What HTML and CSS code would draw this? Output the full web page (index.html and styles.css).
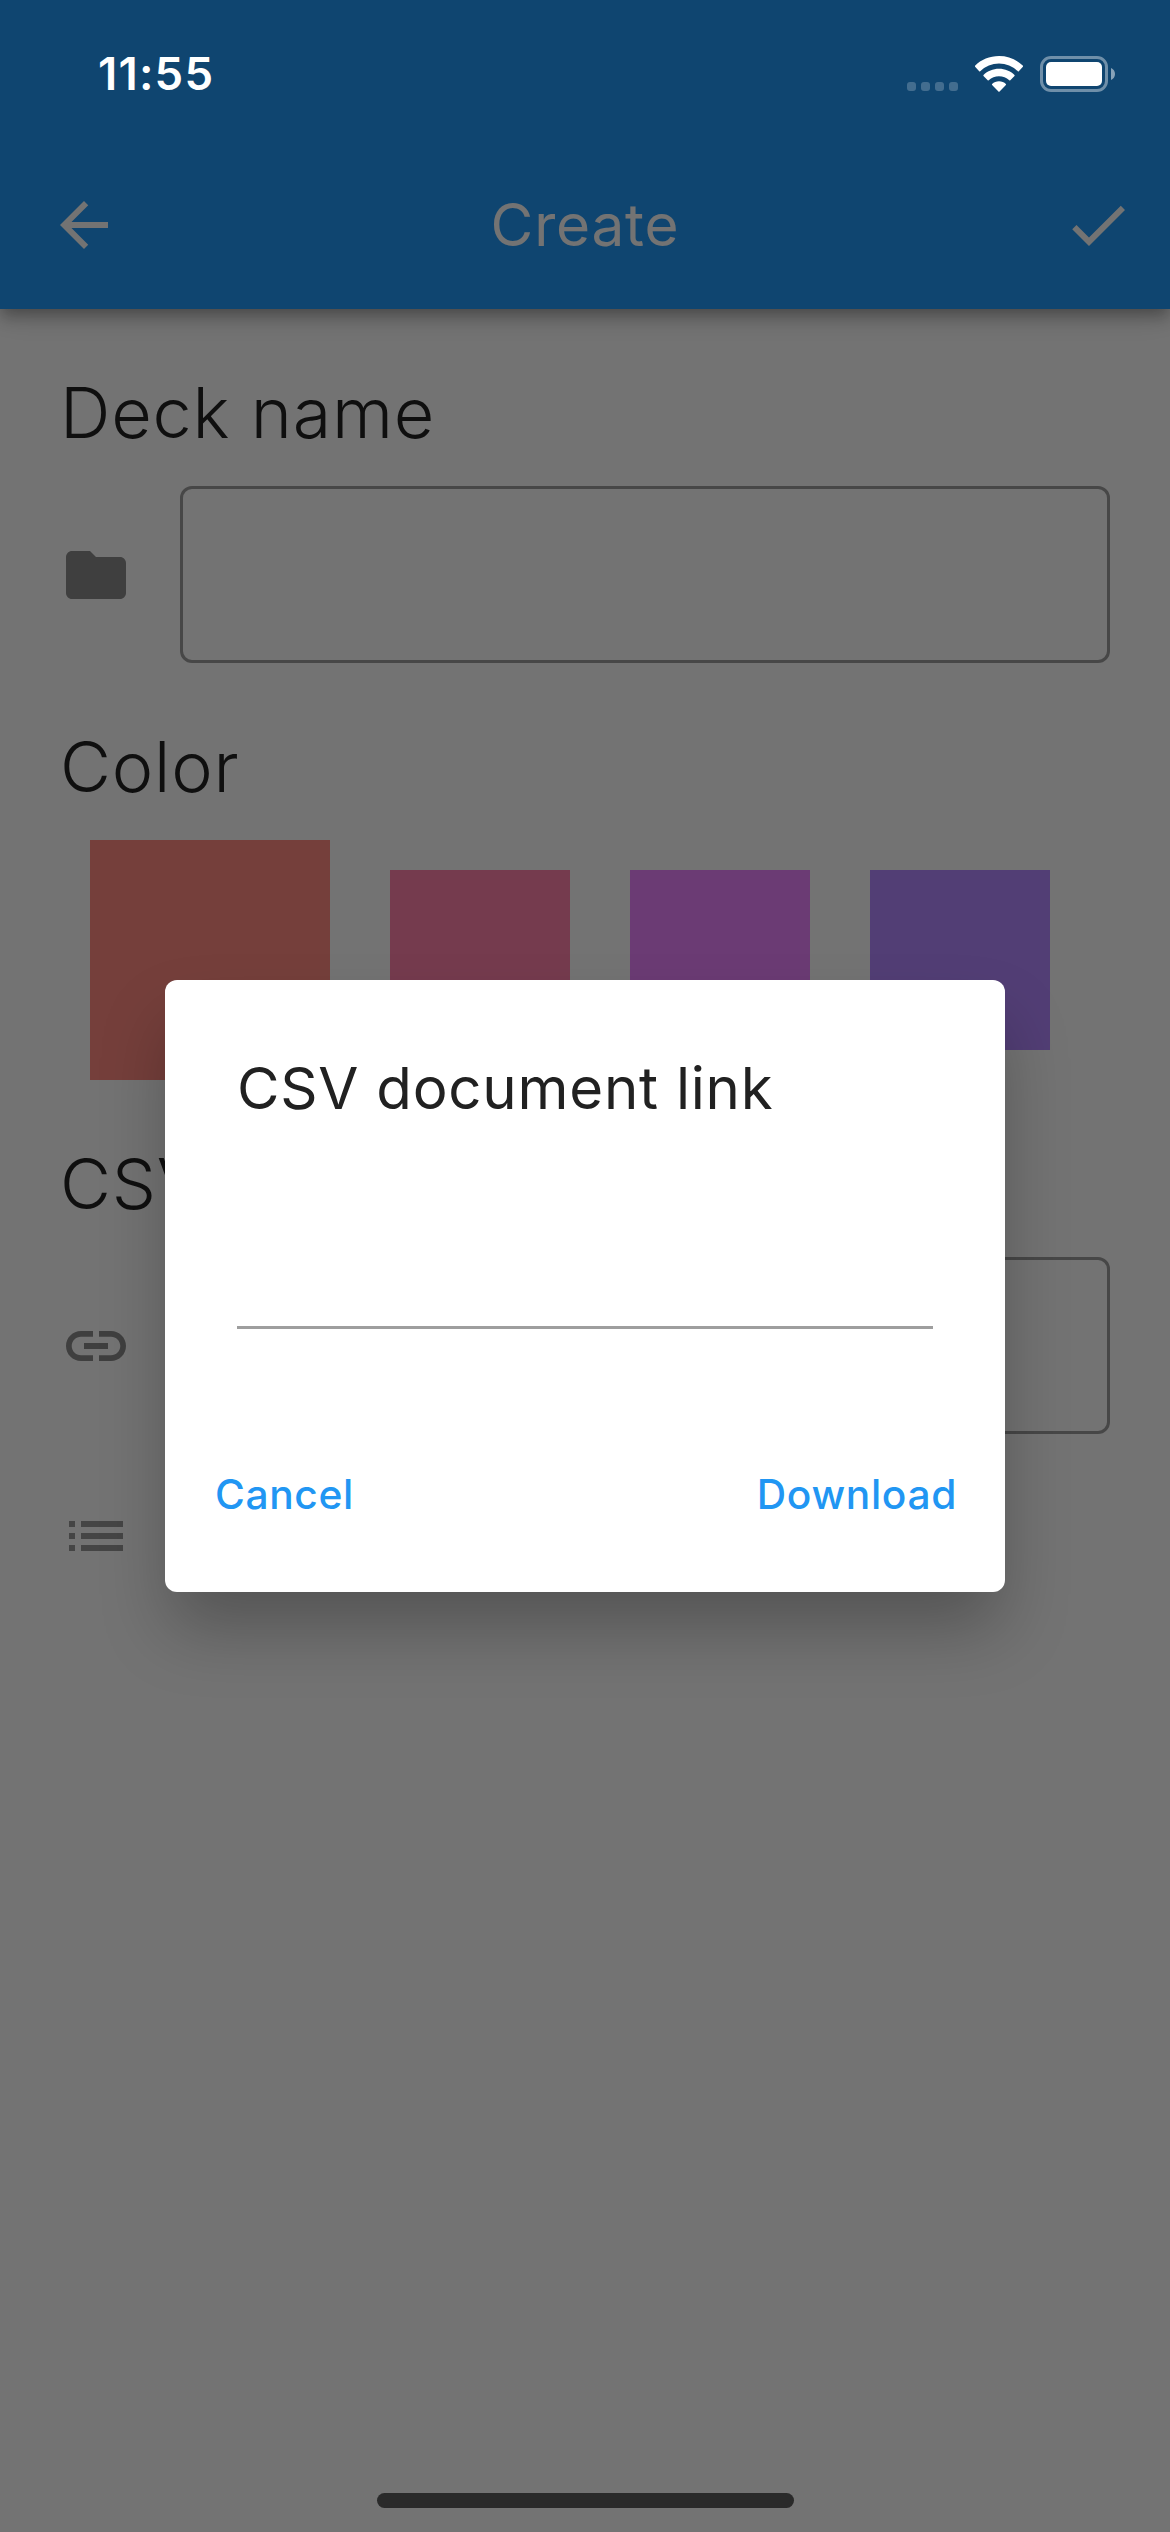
FILE: index.html
```html
<!DOCTYPE html>
<html lang="en">
<head>
<meta charset="utf-8">
<title>Create</title>
<link rel="stylesheet" href="styles.css">
</head>
<body>
<div class="screen">
  <header class="app-bar">
    <svg class="icon" viewBox="0 0 24 24"><path d="M20 11H7.83l5.59-5.59L12 4l-8 8 8 8 1.41-1.41L7.83 13H20z"/></svg>
    <h1 class="app-title">Create</h1>
    <svg class="icon" viewBox="0 0 24 24"><path d="M9 16.17L4.83 12l-1.42 1.41L9 19 21 7l-1.41-1.41z"/></svg>
  </header>

  <main class="content">
    <section class="group">
      <h2 class="heading">Deck name</h2>
      <div class="field-row">
        <svg class="icon" viewBox="0 0 24 24"><path d="M10 4H4c-1.1 0-1.99.9-1.99 2L2 18c0 1.1.9 2 2 2h16c1.1 0 2-.9 2-2V8c0-1.1-.9-2-2-2h-8l-2-2z"/></svg>
        <div class="field"></div>
      </div>
    </section>
    <section class="group">
      <h2 class="heading">Color</h2>
      <div class="swatches">
        <div class="swatch red selected"></div>
        <div class="swatch pink"></div>
        <div class="swatch purple"></div>
        <div class="swatch violet"></div>
      </div>
    </section>
    <section class="group">
      <h2 class="heading">CSV</h2>
      <div class="field-row">
        <svg class="icon" viewBox="0 0 24 24"><path d="M3.9 12c0-1.71 1.39-3.1 3.1-3.1h4V7H7c-2.76 0-5 2.24-5 5s2.24 5 5 5h4v-1.9H7c-1.71 0-3.1-1.39-3.1-3.1zM8 13h8v-2H8v2zm9-6h-4v1.9h4c1.71 0 3.1 1.39 3.1 3.1s-1.39 3.1-3.1 3.1h-4V17h4c2.76 0 5-2.24 5-5s-2.24-5-5-5z"/></svg>
        <div class="field"></div>
      </div>
      <svg class="icon list-icon" viewBox="0 0 24 24"><path d="M3 13h2v-2H3v2zm0 4h2v-2H3v2zm0-8h2V7H3v2zm4 4h14v-2H7v2zm0 4h14v-2H7v2zM7 7v2h14V7H7z"/></svg>
    </section>
  </main>

  <div class="barrier">
    <div class="dialog">
      <h3 class="dialog-title">CSV document link</h3>
      <div class="link-input"></div>
      <div class="actions">
        <span class="action cancel">Cancel</span>
        <span class="action download">Download</span>
      </div>
    </div>
  </div>

  <div class="status-bar">
    <span class="time">11:55</span>
    <div class="indicators">
      <div class="dots"><i></i><i></i><i></i><i></i></div>
      <svg class="wifi" viewBox="0 0 48 36"><path d="M24 0C33.4 0 41.800 3.600 48 9.700Q48.300 10.200 47.900 10.700L43.800 15.200Q43.300 15.600 42.800 15.200A27 27 0 0 0 5.200 15.200Q4.700 15.600 4.200 15.200L.1 10.700Q-.3 10.200 0 9.700C6.200 3.600 14.600 0 24 0z"/><path d="M24 12.800C30 12.800 35.500 15.100 39.500 18.900Q39.900 19.400 39.500 19.900L35.300 24.200Q34.800 24.600 34.300 24.200A15.500 15.500 0 0 0 13.700 24.200Q13.200 24.600 12.700 24.200L8.500 19.900Q8.100 19.400 8.500 18.900C12.500 15.100 18 12.800 24 12.800z"/><path d="M24 25.200C26.700 25.200 29.100 26.200 30.900 27.900Q31.300 28.400 30.900 28.900L24.600 35.500Q24 36 23.400 35.500L17.100 28.900Q16.700 28.400 17.100 27.900C18.900 26.200 21.300 25.200 24 25.200z"/></svg>
      <svg class="battery" viewBox="0 0 75 36"><rect x="1.500" y="1.500" width="65" height="33" rx="9.500" fill="none" stroke="#fff" stroke-width="3" opacity=".4"/><rect x="6" y="6" width="56" height="24" rx="5"/><path d="M71 12c2.400 1 4 3.300 4 6s-1.600 5-4 6z" opacity=".5"/></svg>
    </div>
  </div>
  <div class="home-indicator"></div>
</div>
</body>
</html>
```

FILE: styles.css
```css
* { box-sizing: border-box; margin: 0; }

body { font-family: Inter, "Liberation Sans", sans-serif; }

.screen {
  position: relative;
  width: 1170px;
  height: 2532px;
  overflow: hidden;
  background: #fafafa;
}

.icon { width: 72px; height: 72px; flex: none; display: block; fill: currentColor; }

.app-bar {
  position: relative;
  z-index: 1;
  display: flex;
  align-items: center;
  justify-content: space-between;
  height: 309px;
  padding: 141px 36px 0 48px;
  background: #2196f3;
  color: #fafafa;
  box-shadow: 0 6px 12px -3px rgba(0, 0, 0, .2), 0 12px 15px rgba(0, 0, 0, .14), 0 3px 30px rgba(0, 0, 0, .12);
}

.app-title {
  margin-right: 12px;
  font-size: 58.500px;
  line-height: 72px;
  font-weight: 400;
  letter-spacing: .8px;
}

.content {
  display: flex;
  flex-direction: column;
  gap: 59px;
  padding: 59px 60px 0;
  color: rgba(0, 0, 0, .45);
}

.heading {
  margin-bottom: 28px;
  font-size: 70px;
  line-height: 90px;
  font-weight: 300;
  letter-spacing: .8px;
  color: rgba(0, 0, 0, .87);
}

.field-row { display: flex; align-items: center; gap: 48px; }

.field {
  flex: 1;
  height: 177px;
  border: 3px solid rgba(0, 0, 0, .38);
  border-radius: 12px;
}

.swatches { display: flex; align-items: center; gap: 60px; height: 240px; padding-left: 30px; }
.swatch { width: 180px; height: 180px; }
.swatch.selected { width: 240px; height: 240px; }
.red { background: #ff8a80; }
.pink { background: #ff80ab; }
.purple { background: #ea80fc; }
.violet { background: #b388ff; }

.list-icon { margin-top: 66px; color: rgba(0, 0, 0, .4); }

.barrier {
  position: absolute;
  z-index: 2;
  inset: 0;
  display: flex;
  align-items: center;
  justify-content: center;
  padding: 141px 0 102px;
  background: rgba(0, 0, 0, .54);
}

.dialog {
  display: flex;
  flex-direction: column;
  width: 840px;
  height: 612px;
  padding: 72px 48px 61px;
  border-radius: 12px;
  background: #fff;
  box-shadow: 0 40px 68px -5px rgba(0, 0, 0, .27);
}

.dialog-title {
  padding-left: 24px;
  font-size: 58.200px;
  line-height: 72px;
  font-weight: 400;
  letter-spacing: .75px;
  color: #212121;
}

.link-input { height: 205.500px; margin: 0 24px; border-bottom: 3px solid #9e9e9e; }

.actions {
  display: flex;
  justify-content: space-between;
  margin-top: auto;
  padding-left: 2px;
  line-height: 72px;
}

.action { font-size: 40.700px; font-weight: 500; letter-spacing: .65px; color: #2196f3; }

.status-bar {
  position: absolute;
  z-index: 3;
  inset: 0 0 auto;
  display: flex;
  align-items: center;
  justify-content: space-between;
  height: 147px;
  padding: 0 55px 0 98px;
  color: #fff;
}

.time { padding-top: 1px; font-size: 45.500px; line-height: 60px; font-weight: 600; letter-spacing: 1.200px; }

.indicators { display: flex; align-items: center; }
.dots { display: flex; gap: 5px; padding-top: 26px; margin-right: 17px; }
.dots i { width: 9px; height: 9px; border-radius: 3px; background: rgba(255, 255, 255, .22); }
.wifi { width: 48px; height: 36px; margin-right: 17px; fill: #fff; }
.battery { width: 75px; height: 36px; fill: #fff; }

.home-indicator {
  position: absolute;
  z-index: 3;
  bottom: 24px;
  left: 377px;
  width: 417px;
  height: 15px;
  border-radius: 8px;
  background: #2a2a2a;
}
```
